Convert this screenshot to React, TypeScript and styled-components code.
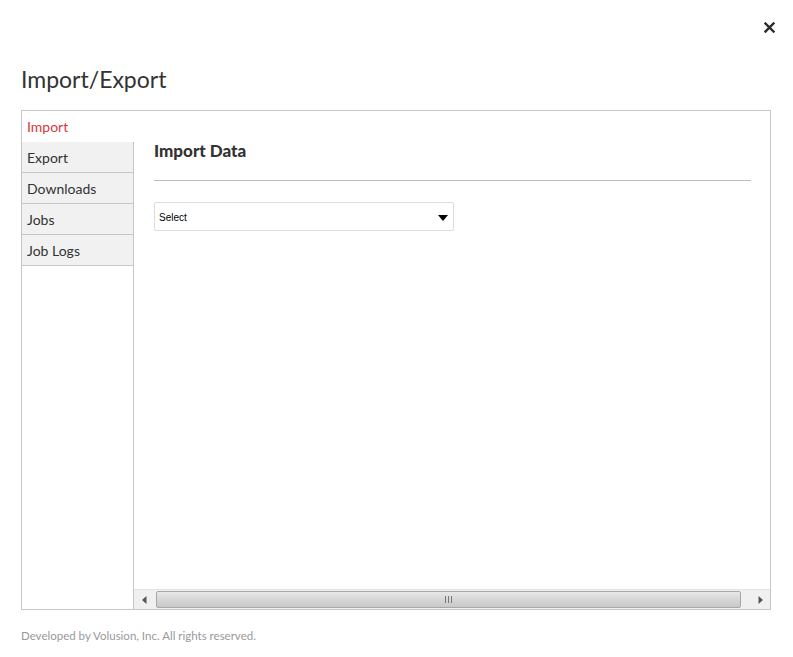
import React, { useState } from "react";
import styled, { createGlobalStyle } from "styled-components";

const GlobalStyle = createGlobalStyle`
  html, body {
    margin: 0;
    padding: 0;
    background: #ffffff;
  }
  body {
    font-family: Lato, "Open Sans", sans-serif;
    color: #333333;
  }
`;

const tabs = ["Import", "Export", "Downloads", "Jobs", "Job Logs"];

const App: React.FC = () => {
  const [active, setActive] = useState("Import");

  return (
    <>
      <GlobalStyle />
      <Page>
        <TopBar>
          <CloseButton aria-label="Close">
            <svg width="11" height="11" viewBox="0 0 11 11">
              <path
                d="M1.5 1.5 L9.5 9.5 M9.5 1.5 L1.5 9.5"
                stroke="#2b2b2b"
                strokeWidth="2.4"
                strokeLinecap="square"
              />
            </svg>
          </CloseButton>
        </TopBar>
        <Title>Import/Export</Title>
        <Frame>
          <Sidebar>
            {tabs.map((t) => (
              <Tab key={t} $active={t === active} onClick={() => setActive(t)}>
                {t}
              </Tab>
            ))}
            <SidebarFill />
          </Sidebar>
          <Content>
            <Main>
              <Heading>Import Data</Heading>
              <Divider />
              <SelectBox>
                <span>Select</span>
                <Caret />
              </SelectBox>
            </Main>
            <ScrollBar>
              <ArrowButton>
                <svg width="5" height="8" viewBox="0 0 5 8">
                  <path d="M4.5 0 L0 4 L4.5 8 Z" fill="#555" />
                </svg>
              </ArrowButton>
              <Track>
                <Thumb>
                  <Grip />
                </Thumb>
              </Track>
              <ArrowButton>
                <svg width="5" height="8" viewBox="0 0 5 8">
                  <path d="M0.5 0 L5 4 L0.5 8 Z" fill="#555" />
                </svg>
              </ArrowButton>
            </ScrollBar>
          </Content>
        </Frame>
        <Footer>Developed by Volusion, Inc. All rights reserved.</Footer>
      </Page>
    </>
  );
};

const Page = styled.div`
  width: 793px;
  height: 657px;
  padding: 0 22px 0 21px;
  box-sizing: border-box;
  display: flex;
  flex-direction: column;
`;

const TopBar = styled.div`
  display: flex;
  justify-content: flex-end;
  padding-top: 22px;
  height: 33px;
  box-sizing: border-box;
`;

const CloseButton = styled.button`
  border: none;
  background: none;
  padding: 0;
  margin-right: -4px;
  width: 11px;
  height: 11px;
  display: flex;
  cursor: pointer;
`;

const Title = styled.h1`
  margin: 31px 0 0;
  font-size: 23px;
  line-height: 31px;
  font-weight: 400;
  color: #333333;
  height: 46px;
`;

const Frame = styled.div`
  height: 500px;
  border: 1px solid #c6c6c6;
  box-sizing: border-box;
  display: flex;
`;

const Sidebar = styled.div`
  width: 112px;
  display: flex;
  flex-direction: column;
  flex-shrink: 0;
`;

const Tab = styled.div<{ $active: boolean }>`
  height: 31px;
  box-sizing: border-box;
  padding: 1px 5px 0;
  display: flex;
  align-items: center;
  font-size: 14px;
  cursor: pointer;
  color: ${(p) => (p.$active ? "#d9363e" : "#333333")};
  background: ${(p) => (p.$active ? "#ffffff" : "#f1f1f1")};
  border-bottom: 1px solid ${(p) => (p.$active ? "transparent" : "#c6c6c6")};
  border-right: 1px solid ${(p) => (p.$active ? "transparent" : "#c6c6c6")};
  border-left: ${(p) => (p.$active ? "none" : "1px solid #c6c6c6")};
  margin-left: ${(p) => (p.$active ? "0" : "-1px")};
`;

const SidebarFill = styled.div`
  flex: 1;
  border-right: 1px solid #c6c6c6;
`;

const Content = styled.div`
  flex: 1;
  display: flex;
  flex-direction: column;
  min-width: 0;
`;

const Main = styled.div`
  flex: 1;
  padding: 28px 19px 0 20px;
`;

const Heading = styled.h2`
  margin: 0;
  font-size: 17px;
  line-height: 24px;
  font-weight: 900;
  color: #333333;
`;

const Divider = styled.hr`
  margin: 17px 0 21px;
  border: none;
  border-top: 1px solid #bdbdbd;
  height: 0;
`;

const SelectBox = styled.div`
  width: 300px;
  height: 29px;
  box-sizing: border-box;
  border: 1px solid #dcdcdc;
  border-radius: 2px;
  display: flex;
  align-items: center;
  justify-content: space-between;
  padding: 2px 5px 0 4px;
  font-family: "Liberation Sans", Arial, sans-serif;
  font-size: 10px;
  color: #000000;
`;

const Caret = styled.span`
  width: 0;
  height: 0;
  border-left: 5px solid transparent;
  border-right: 5px solid transparent;
  border-top: 6px solid #000000;
`;

const ScrollBar = styled.div`
  height: 19px;
  display: flex;
  align-items: stretch;
  background: #f0f0f0;
  border-top: 1px solid #e2e2e2;
`;

const ArrowButton = styled.div`
  width: 20px;
  display: flex;
  align-items: center;
  justify-content: center;
`;

const Track = styled.div`
  flex: 1;
  padding: 1px 9px 1px 2px;
  display: flex;
`;

const Thumb = styled.div`
  flex: 1;
  border: 1px solid #a8a8a8;
  border-radius: 2px;
  background: linear-gradient(#e8e8e8, #d6d6d6 50%, #c9c9c9);
  display: flex;
  align-items: center;
  justify-content: center;
`;

const Grip = styled.div`
  width: 7px;
  height: 7px;
  background: repeating-linear-gradient(
    90deg,
    #777 0,
    #777 1px,
    transparent 1px,
    transparent 3px
  );
`;

const Footer = styled.div`
  margin-top: 19px;
  font-size: 11.5px;
  color: #999999;
`;

export default App;
